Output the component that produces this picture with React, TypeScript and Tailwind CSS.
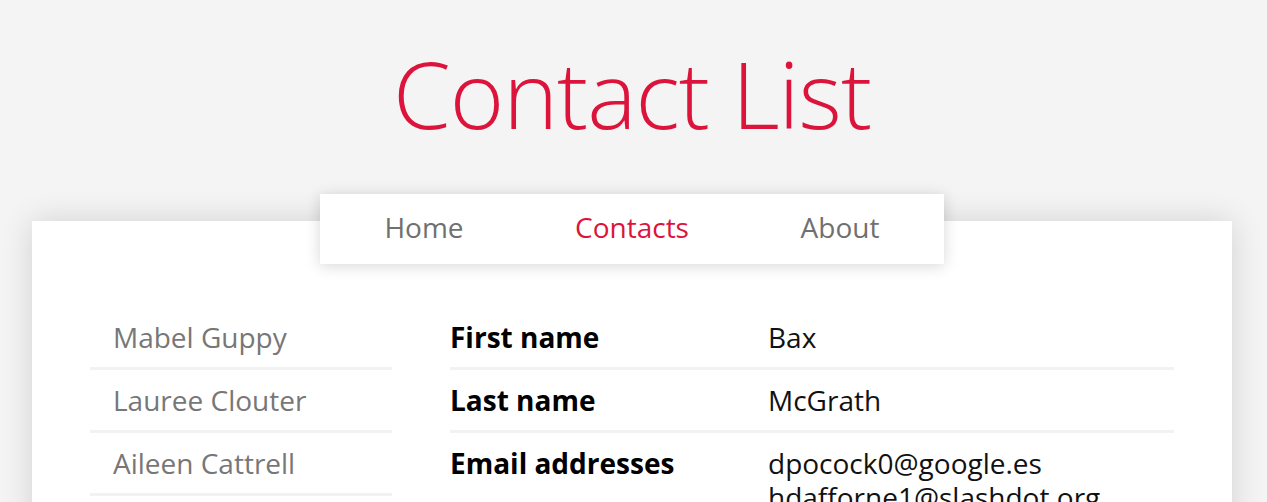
import React from "react";

const contacts = ["Mabel Guppy", "Lauree Clouter", "Aileen Cattrell", "Bax McGrath"];

export default function App() {
  return (
    <div className="min-h-screen bg-[#f4f4f4] overflow-hidden" style={{ fontFamily: '"Open Sans", "Noto Sans", sans-serif' }}>
      <div className="ml-8 w-[1200px]">
        <h1 className="pt-[45px] text-center text-[93px] leading-[96px] font-light text-[#dc143c] tracking-[-1px]">
          Contact List
        </h1>
        <nav className="relative z-10 mx-auto mt-[53px] grid h-[70px] w-[624px] grid-cols-3 items-center bg-white pb-[4px] text-center text-[28px] font-normal text-[#707070] shadow-[0_2px_14px_rgba(0,0,0,0.16)]">
          <span>Home</span>
          <span className="text-[#dc143c]">Contacts</span>
          <span>About</span>
        </nav>
        <div className="-mt-[43px] h-[400px] bg-white px-[58px] pt-[86px] shadow-[0_0_30px_rgba(0,0,0,0.14)]">
          <div className="flex gap-[58px]">
            <ul className="w-[302px] shrink-0">
              {contacts.map((c) => (
                <li key={c} className="border-b-[3px] border-[#f2f2f2] py-[13px] pl-[23px] text-[28px] leading-[34px] font-normal text-[#777]">
                  {c}
                </li>
              ))}
            </ul>
            <div className="flex-1">
              <div className="flex border-b-[3px] border-[#f2f2f2] py-[13px] text-[28px] leading-[34px]">
                <div className="w-[318px] font-bold text-black">First name</div>
                <div className="text-[#111]">Bax</div>
              </div>
              <div className="flex border-b-[3px] border-[#f2f2f2] py-[13px] text-[28px] leading-[34px]">
                <div className="w-[318px] font-bold text-black">Last name</div>
                <div className="text-[#111]">McGrath</div>
              </div>
              <div className="flex border-b-[3px] border-[#f2f2f2] py-[13px] text-[28px] leading-[34px]">
                <div className="w-[318px] font-bold text-black">Email addresses</div>
                <div className="text-[#111]">
                  <div>dpocock0@google.es</div>
                  <div>hdafforne1@slashdot.org</div>
                </div>
              </div>
            </div>
          </div>
        </div>
      </div>
    </div>
  );
}
